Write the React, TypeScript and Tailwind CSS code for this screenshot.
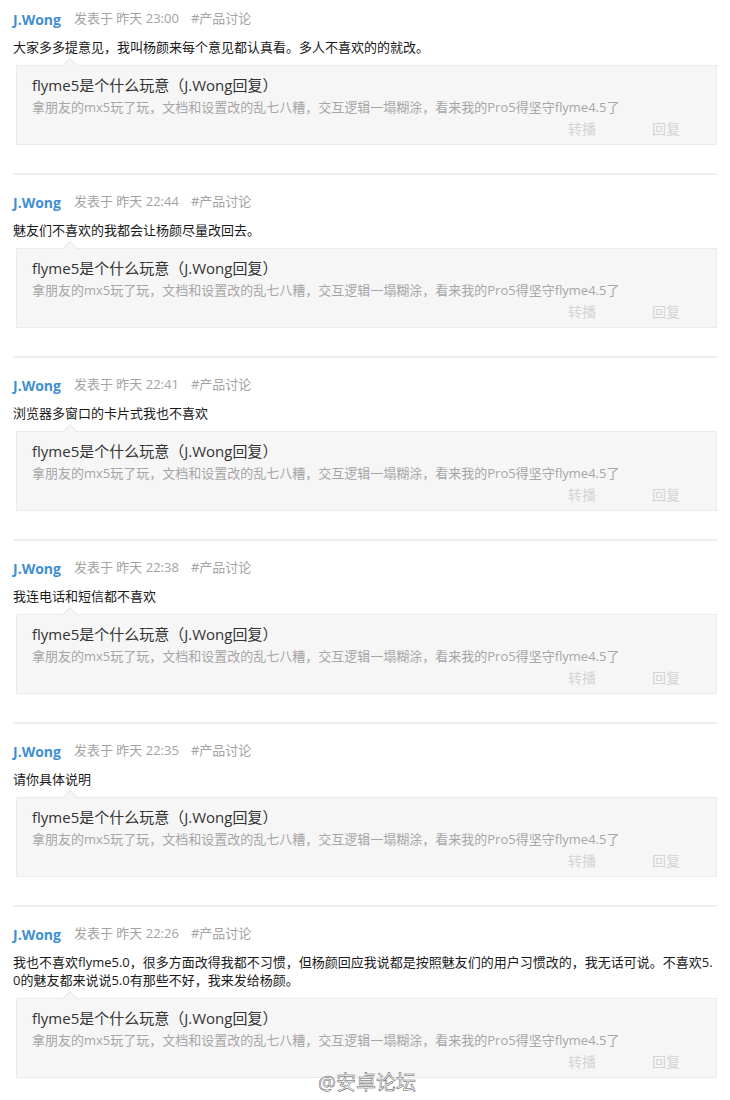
import React from "react";

const FONT = { fontFamily: '"Open Sans", "Noto Sans CJK SC", sans-serif' };

type Post = { time: string; body: React.ReactNode };

const posts: Post[] = [
  { time: "23:00", body: "大家多多提意见，我叫杨颜来每个意见都认真看。多人不喜欢的的就改。" },
  { time: "22:44", body: "魅友们不喜欢的我都会让杨颜尽量改回去。" },
  { time: "22:41", body: "浏览器多窗口的卡片式我也不喜欢" },
  { time: "22:38", body: "我连电话和短信都不喜欢" },
  { time: "22:35", body: "请你具体说明" },
  {
    time: "22:26",
    body: (
      <>
        我也不喜欢flyme5.0，很多方面改得我都不习惯，但杨颜回应我说都是按照魅友们的用户习惯改的，我无话可说。不喜欢5.
        <br />
        0的魅友都来说说5.0有那些不好，我来发给杨颜。
      </>
    ),
  },
];

function QuoteBox() {
  return (
    <div className="relative mt-[9px] ml-[3px] h-[80px] border border-[#ebebeb] bg-[#f6f6f6] px-[15px] pt-[9px]">
      {/* bubble arrow */}
      <div className="absolute -top-[8px] left-[45px] h-0 w-0 border-x-[8px] border-b-[8px] border-x-transparent border-b-[#e2e2e2]" />
      <div className="absolute -top-[7px] left-[46px] h-0 w-0 border-x-[7px] border-b-[7px] border-x-transparent border-b-[#f6f6f6]" />
      <p className="text-[15px] leading-[20px] text-[#333]">flyme5是个什么玩意（J.Wong回复）</p>
      <p className="mt-[3px] text-[13px] leading-[18px] text-[#a6a6a6]">
        拿朋友的mx5玩了玩，文档和设置改的乱七八糟，交互逻辑一塌糊涂，看来我的Pro5得坚守flyme4.5了
      </p>
      <div className="mt-[4px] flex justify-end gap-[56px] pr-[21px] text-[14px] leading-[18px] text-[#d4d4d4]">
        <span>转播</span>
        <span>回复</span>
      </div>
    </div>
  );
}

function PostItem({ post, first }: { post: Post; first: boolean }) {
  return (
    <div className={first ? "pt-[11px]" : "pt-[19px]"}>
      <div className="flex h-[16px] items-center text-[13px]">
        <span className="text-[14px] font-bold text-[#3f8fd2]">J.Wong</span>
        <span className="ml-[13px] text-[#a3a3a3]">发表于 昨天 {post.time}</span>
        <span className="ml-[12px] text-[#a3a3a3]">#产品讨论</span>
      </div>
      <div className="mt-[11px] text-[13px] leading-[18px] text-[#1a1a1a]">{post.body}</div>
      <QuoteBox />
      <div className="mt-[28px] h-[2px] bg-[#eeeeee]" />
    </div>
  );
}

export default function App() {
  return (
    <div className="relative h-[1100px] w-[730px] overflow-hidden bg-white" style={FONT}>
      <div className="pl-[13px] pr-[13px]">
        {posts.map((p, i) => (
          <PostItem key={i} post={p} first={i === 0} />
        ))}
      </div>
      {/* watermark */}
      <div
        className="absolute left-[318px] top-[1071px] text-[20px] leading-[24px]"
        style={{ WebkitTextStroke: "0.5px #555", color: "#fff" }}
      >
        @安卓论坛
      </div>
    </div>
  );
}
